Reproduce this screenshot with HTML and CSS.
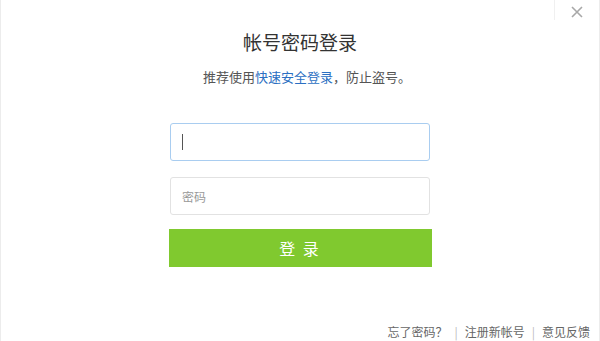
FILE: index.html
```html
<!DOCTYPE html>
<html lang="zh">
<head>
<meta charset="utf-8">
<title>帐号密码登录</title>
<link rel="stylesheet" href="styles.css">
</head>
<body>
<div class="dialog">
  <div class="topbar">
    <span class="sep"></span>
    <button class="close" aria-label="关闭">
      <svg width="12" height="12" viewBox="0 0 12 12"><path d="M1 1L11 11M11 1L1 11" stroke="#a8a8a8" stroke-width="1.6" fill="none"/></svg>
    </button>
  </div>
  <h1 class="title">帐号密码登录</h1>
  <p class="tip">推荐使用<a class="link" href="#">快速安全登录</a>，防止盗号。</p>
  <form class="form">
    <div class="field focus"><span class="caret"></span></div>
    <div class="field"><span class="ph">密码</span></div>
    <button type="button" class="submit">登 录</button>
  </form>
  <div class="footer">
    <a href="#">忘了密码？</a><span class="bar">|</span><a href="#">注册新帐号</a><span class="bar">|</span><a href="#">意见反馈</a>
  </div>
</div>
</body>
</html>
```
FILE: styles.css
```css
html, body {
  margin: 0;
  padding: 0;
  background: #fff;
}
body {
  font-family: "Noto Sans CJK SC", "Liberation Sans", sans-serif;
  color: #333;
}
.dialog {
  width: 600px;
  height: 341px;
  box-sizing: border-box;
  border-left: 1px solid #ececec;
  border-right: 1px solid #ececec;
  display: flex;
  flex-direction: column;
  align-items: center;
}
.topbar {
  align-self: stretch;
  height: 26px;
  display: flex;
  justify-content: flex-end;
  align-items: flex-start;
}
.sep {
  width: 1px;
  height: 20px;
  background: #f0f0f0;
  margin-right: 8px;
}
.close {
  width: 28px;
  height: 26px;
  border: 0;
  background: none;
  padding: 0;
  margin-right: 8px;
  display: flex;
  align-items: flex-start;
  justify-content: center;
  padding-top: 6px;
}
.title {
  margin: 2px 0 0;
  font-size: 19px;
  font-weight: normal;
  line-height: 28px;
  color: #333;
}
.tip {
  margin: 11px 0 0;
  padding-left: 14px;
  font-size: 13px;
  line-height: 20px;
  color: #555;
}
.link {
  color: #2b6fc2;
  text-decoration: none;
}
.form {
  margin-top: 36px;
  width: 263px;
  display: flex;
  flex-direction: column;
  align-items: center;
}
.field {
  width: 260px;
  height: 38px;
  box-sizing: border-box;
  border: 1px solid #e2e2e2;
  border-radius: 3px;
  margin-bottom: 16px;
  display: flex;
  align-items: center;
  padding-left: 11px;
}
.field.focus {
  border-color: #a9cdf0;
}
.caret {
  width: 1px;
  height: 16px;
  background: #555;
}
.ph {
  font-size: 12px;
  color: #999;
}
.submit {
  width: 263px;
  height: 38px;
  margin-top: -2px;
  border: 0;
  background: #80c92f;
  color: #fff;
  font-family: inherit;
  font-size: 16px;
  letter-spacing: 2px;
  cursor: pointer;
}
.footer {
  margin-top: auto;
  align-self: flex-end;
  margin-right: 9px;
  margin-bottom: 1px;
  font-size: 12px;
  line-height: 16px;
  color: #666;
}
.footer a {
  color: #666;
  text-decoration: none;
}
.bar {
  color: #bbb;
  margin: 0 7px;
}
```
